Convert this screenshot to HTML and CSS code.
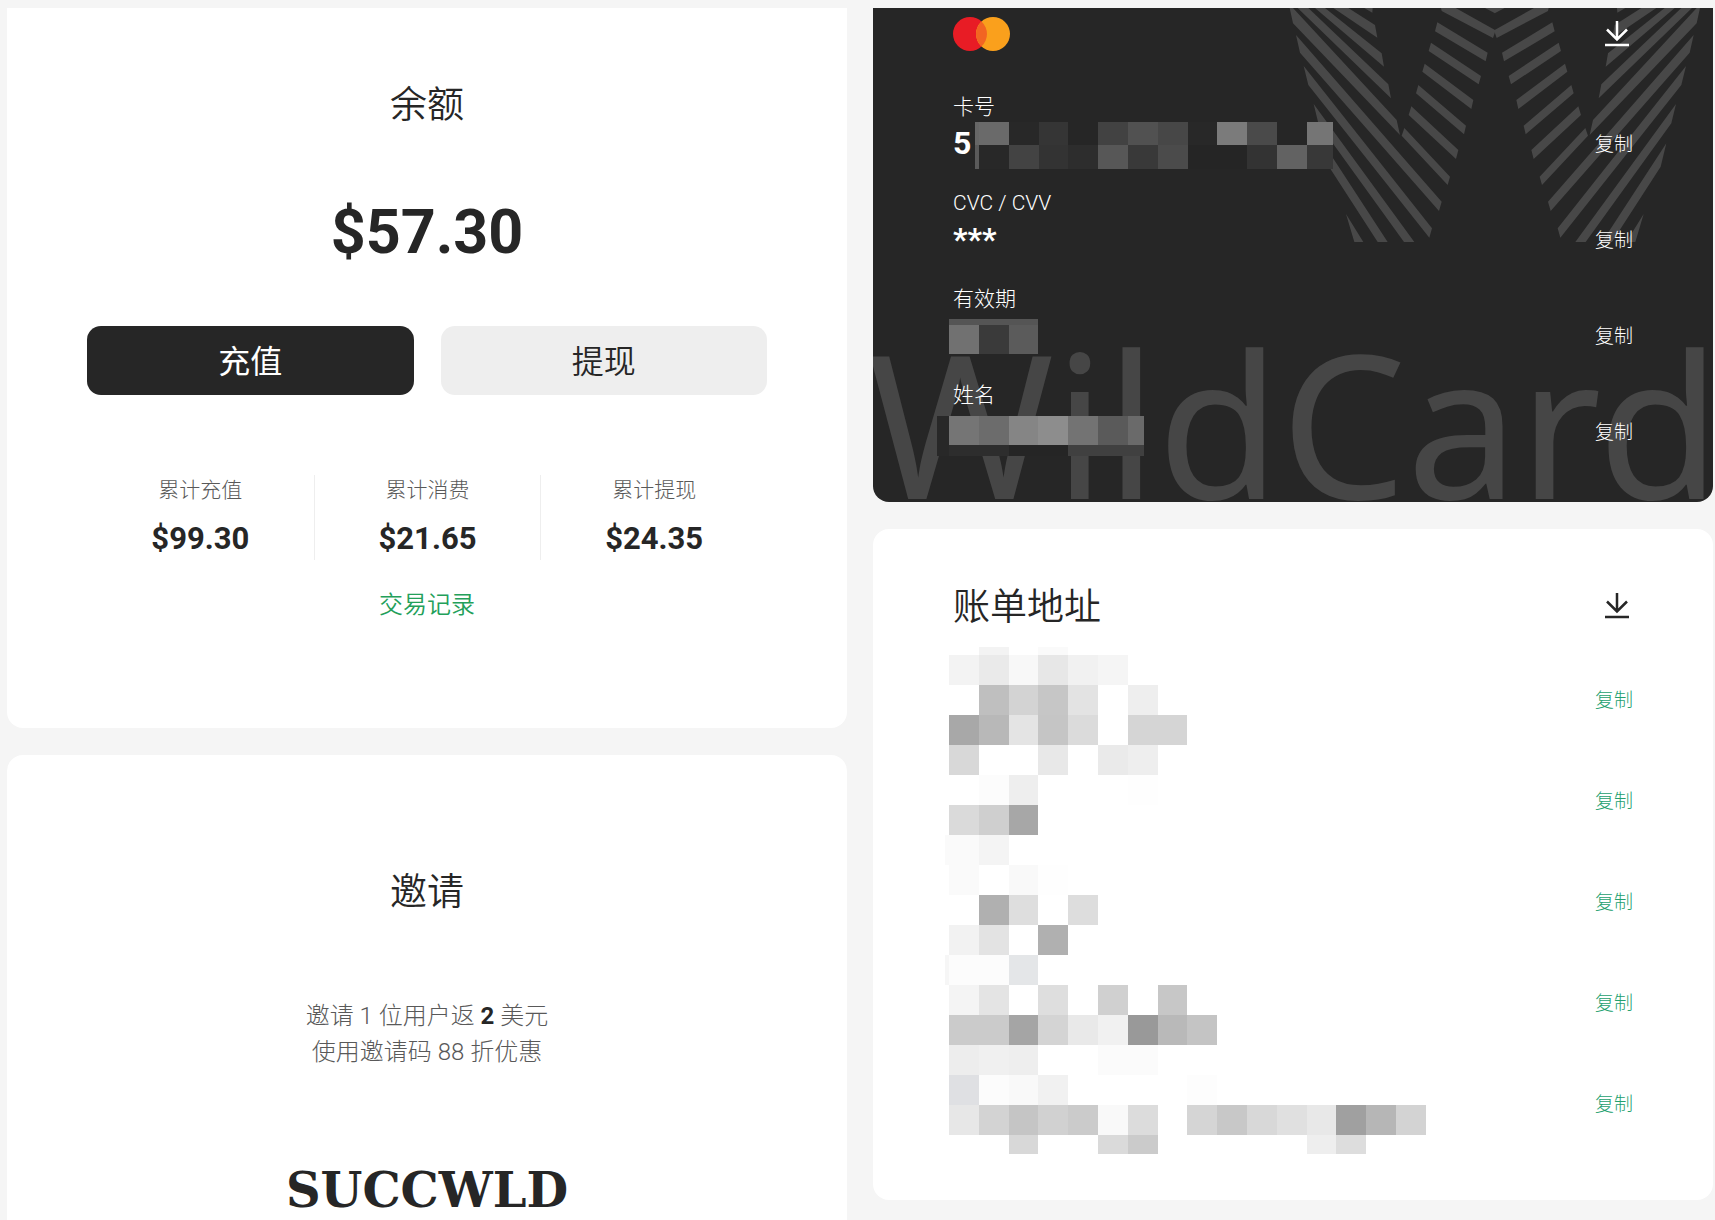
FILE: index.html
```html
<!DOCTYPE html>
<html lang="zh-CN">
<head>
<meta charset="utf-8">
<meta name="viewport" content="width=device-width, initial-scale=1">
<title>WildCard</title>
<link rel="stylesheet" href="styles.css">
</head>
<body>
<main class="page">
  <div class="column">
    <section class="card balance">
      <h2 class="title">余额</h2>
      <p class="amount">$57.30</p>
      <div class="actions">
        <button class="btn btn-dark" type="button">充值</button>
        <button class="btn btn-light" type="button">提现</button>
      </div>
      <dl class="stats">
        <div class="stat"><dt>累计充值</dt><dd>$99.30</dd></div>
        <div class="stat"><dt>累计消费</dt><dd>$21.65</dd></div>
        <div class="stat"><dt>累计提现</dt><dd>$24.35</dd></div>
      </dl>
      <a class="history" href="#history">交易记录</a>
    </section>
    <section class="card invite">
      <h2 class="title">邀请</h2>
      <p class="invite-text">邀请 1 位用户返 <strong>2</strong> 美元<br>使用邀请码 88 折优惠</p>
      <p class="code">SUCCWLD</p>
    </section>
  </div>

  <div class="column">
    <section class="card bank-card">
      <svg class="emblem" viewBox="0 24 1284 702" aria-hidden="true">
        <defs>
          <g id="wing">
            <path d="M238 24H263L262 38ZM190 24L270 75L277 113L145 24ZM120 24L290 160L297 200L90 24ZM70 24L310 253L318 295L38 24ZM14 24H24L335 360L345 405L24 70Z"/>
            <path d="M33 105L470 605L462 633L45 158ZM56 198L441 685L433 713L70 255ZM86 312L388 726H357L100 370ZM115 430L308 726H278L132 500ZM183 642L235 726H208Z"/>
            <path d="M600 24H630V40ZM468 24H512L630 90V97L624 114L470 33ZM457 67L608 158L602 184L450 94ZM438 128L588 228L581 253L431 153ZM419 191L565 300L559 327L412 215ZM400 255L543 377L537 403L393 280ZM379 319L520 450L513 477L371 345ZM358 384L495 530L488 555L350 407Z"/>
          </g>
        </defs>
        <use href="#wing"/>
        <use href="#wing" transform="translate(1259 0) scale(-1 1)"/>
      </svg>
      <span class="wordmark" aria-hidden="true">WildCard</span>
      <div class="bank-content">
        <header class="bank-head">
          <svg class="brand" viewBox="0 0 58 34" role="img" aria-label="Mastercard">
            <circle cx="17" cy="17" r="17" fill="#e81c25"/>
            <circle cx="40" cy="17" r="17" fill="#faa01c"/>
            <path d="M28.500 4.500a17 17 0 0 1 0 25a17 17 0 0 1 0-25Z" fill="#f26522"/>
          </svg>
          <button class="icon-btn" type="button" aria-label="下载">
            <svg viewBox="0 0 32 32"><path d="M16 3V22M6 11.500L16 21.500L26 11.500M4 27H28"/></svg>
          </button>
        </header>
        <div class="field">
          <span class="label">卡号</span>
          <div class="line"><span class="value">5</span><svg class="mosaic number" data-mosaic="number" width="358" height="48"></svg><button class="copy" type="button">复制</button></div>
        </div>
        <div class="field">
          <span class="label">CVC / CVV</span>
          <div class="line"><span class="value">***</span><button class="copy" type="button">复制</button></div>
        </div>
        <div class="field">
          <span class="label">有效期</span>
          <div class="line"><svg class="mosaic" data-mosaic="expiry" width="90" height="48"></svg><button class="copy" type="button">复制</button></div>
        </div>
        <div class="field">
          <span class="label">姓名</span>
          <div class="line"><svg class="mosaic" data-mosaic="name" width="207" height="48"></svg><button class="copy" type="button">复制</button></div>
        </div>
      </div>
    </section>

    <section class="card billing">
      <header class="billing-head">
        <h2 class="title">账单地址</h2>
        <button class="icon-btn" type="button" aria-label="下载">
          <svg viewBox="0 0 32 32"><path d="M16 3V22M6 11.500L16 21.500L26 11.500M4 27H28"/></svg>
        </button>
      </header>
      <div class="billing-body">
        <svg class="mosaic" data-mosaic="address" width="477" height="507"></svg>
        <div class="copies">
          <button class="copy" type="button">复制</button>
          <button class="copy" type="button">复制</button>
          <button class="copy" type="button">复制</button>
          <button class="copy" type="button">复制</button>
          <button class="copy" type="button">复制</button>
        </div>
      </div>
    </section>
  </div>
</main>
<script src="mosaic.js"></script>
</body>
</html>
```
FILE: styles.css
```css
* { box-sizing: border-box; }

body {
  margin: 0;
  background: #f5f5f5;
  color: #262626;
  font-family: Roboto, "Noto Sans CJK SC", sans-serif;
  font-size: 24px;
}

h2, p, dl, dd { margin: 0; }

button {
  margin: 0;
  padding: 0;
  border: 0;
  background: none;
  color: inherit;
  font: inherit;
  cursor: pointer;
}

.page {
  display: grid;
  grid-template-columns: 1fr 1fr;
  gap: 26px;
  min-height: 100vh;
  padding: 8px 2px 0 7px;
}

.column {
  display: flex;
  flex-direction: column;
  gap: 27px;
}

.card {
  border-radius: 16px;
  background: #fff;
}

.title {
  padding-top: 3px;
  font-size: 37px;
  font-weight: 350;
  line-height: 48px;
}

/* Balance */
.balance {
  display: flex;
  flex-direction: column;
  align-items: center;
  padding: 71px 80px 105px;
  border-radius: 0 0 16px 16px;
}

.amount {
  margin-top: 70px;
  font-family: "Roboto Slab", Roboto, sans-serif;
  font-size: 61px;
  font-weight: 700;
  line-height: 64px;
}

.actions {
  display: grid;
  grid-template-columns: 1fr 1fr;
  gap: 27px;
  width: 100%;
  margin-top: 62px;
}

.btn {
  height: 69px;
  padding-bottom: 4px;
  border-radius: 14px;
  font-size: 32px;
}

.btn-dark { background: #262626; color: #fff; }
.btn-light { background: #eee; font-weight: 350; }

.stats {
  display: grid;
  grid-template-columns: repeat(3, 1fr);
  width: 100%;
  margin-top: 80px;
}

.stat {
  height: 85px;
  text-align: center;
}

.stat + .stat { border-left: 1px solid #eee; }

.stat dt {
  color: #595959;
  font-size: 21px;
  font-weight: 300;
  line-height: 30px;
}

.stat dd {
  margin-top: 16px;
  font-family: "Roboto Slab", Roboto, sans-serif;
  font-size: 31px;
  font-weight: 700;
  line-height: 36px;
}

.history {
  margin-top: 27px;
  color: #23a05a;
  font-weight: 350;
  line-height: 36px;
  text-decoration: none;
}

/* Invite */
.invite {
  flex: 1;
  padding: 111px 80px 0;
  border-radius: 16px 16px 0 0;
  text-align: center;
}

.invite-text {
  margin-top: 81px;
  color: #595959;
  font-weight: 300;
  line-height: 36px;
}

.invite-text strong { color: #262626; font-weight: 700; }

.code {
  margin-top: 92px;
  font-family: "Roboto Slab", "DejaVu Serif", serif;
  font-size: 48px;
  font-weight: 700;
  line-height: 56px;
}

/* Bank card */
.bank-card {
  position: relative;
  overflow: hidden;
  border-radius: 0 0 16px 16px;
  background: #262626;
  color: #fff;
}

.emblem {
  position: absolute;
  top: 0;
  right: 0;
  width: 428px;
  height: 234px;
  fill: #484848;
}

.wordmark {
  position: absolute;
  bottom: -20px;
  left: -5px;
  color: #464646;
  font-family: "Noto Sans", sans-serif;
  font-size: 200px;
  line-height: 1;
  white-space: nowrap;
}

.bank-content {
  position: relative;
  padding: 9px 80px 23px;
}

.bank-head, .billing-head {
  display: flex;
  align-items: center;
  justify-content: space-between;
}

.bank-head { margin-bottom: 44px; }

.brand { width: 58px; height: 34px; }

.icon-btn { width: 32px; height: 32px; }

.icon-btn svg {
  display: block;
  fill: none;
  stroke: currentColor;
  stroke-width: 2.5;
}

.field { height: 96px; }

.label {
  display: block;
  font-size: 21px;
  font-weight: 300;
  line-height: 24px;
}

.line {
  display: flex;
  align-items: center;
  height: 48px;
}

.value {
  font-size: 32px;
  font-weight: 700;
}

.copy {
  margin-left: auto;
  padding-top: 3px;
  font-size: 19px;
  font-weight: 300;
  line-height: 28px;
}

.mosaic {
  display: block;
  margin-left: -4px;
  overflow: visible;
}

.number { margin-left: 4px; }

/* Billing address */
.billing { padding: 49px 80px 46px; }

.billing-head { height: 56px; }

.billing-body {
  display: flex;
  justify-content: space-between;
  margin-top: 13px;
}

.copies {
  display: grid;
  grid-auto-rows: 101px;
  align-items: center;
  padding-top: 2px;
  color: #23a06e;
}
```
FILE: mosaic.js
```js
// Draws the censor mosaics. Each strip is [x, y, height, colours]; "-" skips a cell.
const PITCH = 29.8;
const MOSAICS = {
  number: [
    [4, 3, 23, "6a6a6a 282828 353535 - 424242 515151 474747 282828 7b7b7b 4a4a4a 262626"],
    [4, 26, 24, "282828 434343 333333 2d2d2d 575757 393939 4b4b4b 252525 252525 333333 626262"],
  ],
  expiry: [
    [0, 8, 6, "555555 555555 555555"],
    [0, 14, 29, "717171 3a3a3a 5b5b5b"],
  ],
  name: [
    [0, 9, 29, "757575 6c6c6c 858585 8d8d8d 737373 5a5a5a"],
    [0, 38, 11, "2d2d2d 2d2d2d 252525 252525 404040 404040"],
  ],
  address: [
    [0, 0, 8, "- f3f3f3 - fafafa"],
    [0, 8, 30, "f3f3f3 eaeaea f8f8f8 e7e7e7 f1f1f1 f5f5f5"],
    [0, 38, 30, "- bfbfbf d3d3d3 c6c6c6 e3e3e3 - eeeeee"],
    [0, 68, 30, "a8a8a8 b8b8b8 e4e4e4 c5c5c5 dbdbdb - d5d5d5 d5d5d5"],
    [0, 98, 30, "d8d8d8 - - e8e8e8 - eaeaea eeeeee"],
    [0, 128, 30, "- fcfcfc eeeeee - - - fefefe"],
    [0, 158, 30, "dadada cfcfcf a7a7a7"],
    [0, 188, 30, "fafafa f4f4f4"],
    [0, 218, 30, "fafafa - f9f9f9 fefefe"],
    [0, 248, 30, "- b0b0b0 dedede - dddddd"],
    [0, 278, 30, "f2f2f2 e3e3e3 - b0b0b0"],
    [0, 308, 30, "fcfcfc fcfcfc e4e6e8"],
    [0, 338, 30, "f4f4f4 e4e4e4 - dedede - d0d0d0 - c7c7c7"],
    [0, 368, 30, "cbcbcb cbcbcb a5a5a5 d4d4d4 e9e9e9 f1f1f1 999999 b9b9b9 c4c4c4"],
    [0, 398, 30, "ededed f0f0f0 eeeeee - - fbfbfb fbfbfb"],
    [0, 428, 30, "dfe0e3 fcfcfc f9f9f9 f1f1f1 - - - - fdfdfd"],
    [0, 458, 30, "e7e7e7 d3d3d3 c5c5c5 d1d1d1 cbcbcb f9f9f9 dcdcdc - d5d5d5 c8c8c8 d8d8d8 e0e0e0 e8e8e8 a0a0a0 b6b6b6 d3d3d3"],
    [0, 488, 19, "- - d8d8d8 - - dadada cbcbcb - - - - - eeeeee dddddd"],
  ],
};

// Partial cells at the edges: [x, y, width, height, colour].
const EDGES = {
  number: [[0, 3, 4, 23, "666666"], [0, 26, 4, 24, "5a5a5a"], [332, 3, 26, 23, "757575"], [332, 26, 26, 24, "383838"]],
  name: [[-12, 9, 12, 40, "282828"], [179, 9, 16, 29, "6a6a6a"], [179, 38, 16, 11, "404040"]],
  address: [[-4, 188, 4, 30, "fafafa"], [-4, 308, 4, 30, "f6f6f6"]],
};

function addCell(svg, x, y, width, height, colour) {
  const rect = document.createElementNS("http://www.w3.org/2000/svg", "rect");
  rect.setAttribute("x", x);
  rect.setAttribute("y", y);
  rect.setAttribute("width", width);
  rect.setAttribute("height", height);
  rect.setAttribute("fill", "#" + colour);
  svg.appendChild(rect);
}

document.querySelectorAll("[data-mosaic]").forEach((svg) => {
  const name = svg.dataset.mosaic;
  MOSAICS[name].forEach(([x, y, height, colours]) => {
    colours.split(" ").forEach((colour, i) => {
      if (colour === "-") return;
      const left = Math.round(i * PITCH);
      const right = Math.round((i + 1) * PITCH);
      addCell(svg, x + left, y, right - left, height, colour);
    });
  });
  (EDGES[name] || []).forEach((edge) => addCell(svg, ...edge));
});
```
